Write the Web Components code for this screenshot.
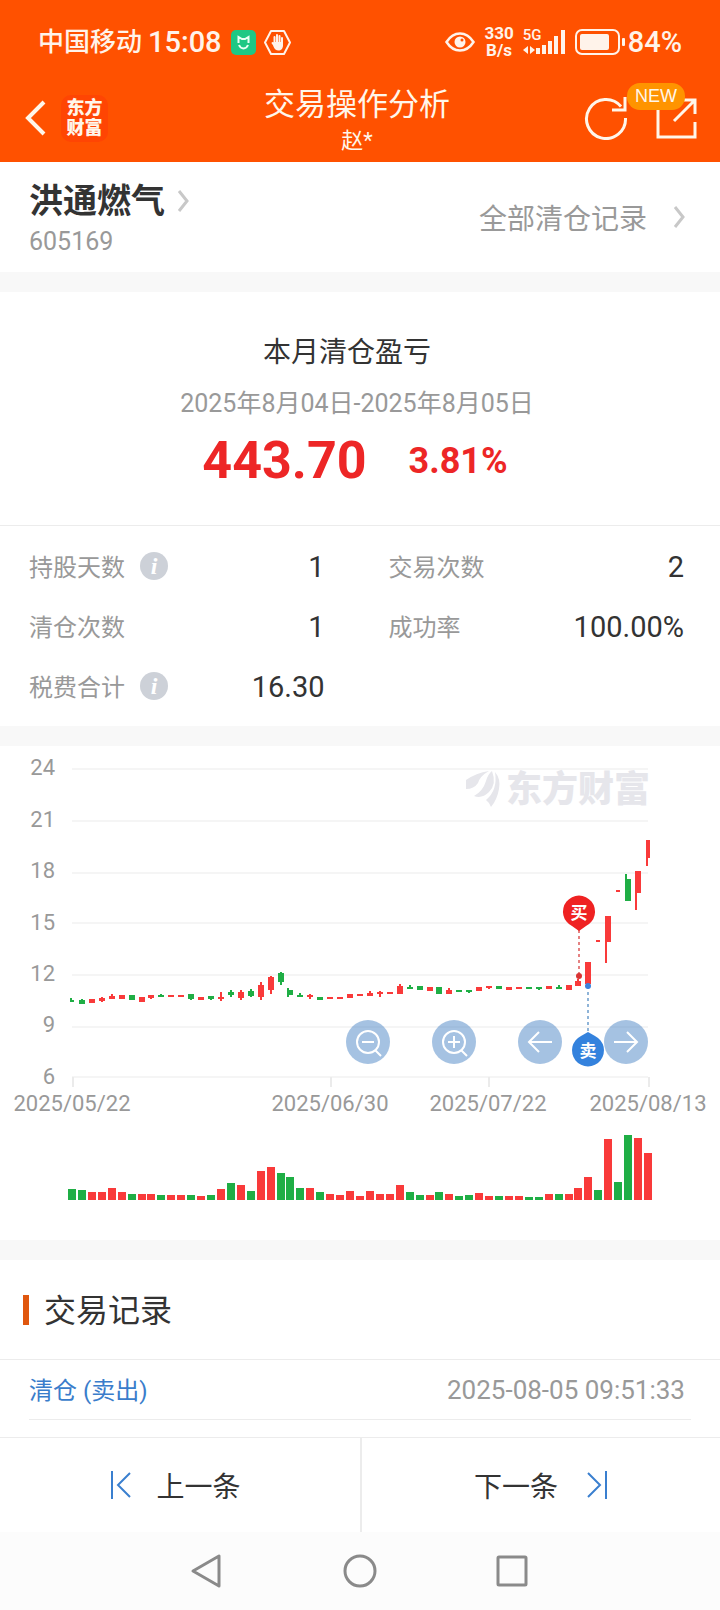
<!DOCTYPE html>
<html lang="zh-CN">
<head>
<meta charset="utf-8">
<meta name="viewport" content="width=device-width, initial-scale=1">
<title>交易操作分析</title>
<style>
    body {
        margin: 0;
        background: #f8f8f8;
        color: #333;
        font-family: Roboto, "Noto Sans CJK SC", sans-serif;
    }
</style>
</head>
<body>
<trade-page></trade-page>

<script>
class StatusBar extends HTMLElement {
    constructor() {
        super();
        this.attachShadow({ mode: 'open' }).innerHTML = `
            <style>
            :host {
                display: flex;
                align-items: center;
                justify-content: space-between;
                height: 84px;
                padding: 0 38px;
                color: #fff3ea;
                font-size: 29px;
                font-weight: 500;
            }
            .side { display: flex; align-items: center; }
            .carrier { font-size: 26px; line-height: 36px; }
            .time { margin: 0 9px 0 6px; }
            .hand { margin-left: 8px; }
            .speed {
                margin: 0 9px;
                font-size: 17px;
                line-height: 17px;
                font-weight: 700;
                text-align: center;
            }
            .signal { position: relative; }
            .signal span {
                position: absolute;
                left: 0;
                top: -2px;
                font-size: 15px;
                line-height: 18px;
            }
            .battery { margin: 0 3px 0 9px; }
            svg { display: block; }
            </style>
            <div class="side">
                <span class="carrier">中国移动</span>
                <span class="time">15:08</span>
                <svg width="25" height="25" viewBox="0 0 25 25">
                    <rect width="25" height="25" rx="5" fill="#1ec884"/>
                    <path d="M7.500 13V7l3.500 2h3l3.500-2v6M8 15c1 2.500 2.500 3.500 4.500 3.500s3.500-1 4.500-3.500" fill="none" stroke="#e9fff4" stroke-width="2"/>
                </svg>
                <svg class="hand" width="27" height="25" viewBox="0 0 27 25">
                    <path d="M7 1h13l6 11.500-6 11.500H7L1 12.500z" fill="none" stroke="currentColor" stroke-width="2" stroke-linejoin="round"/>
                    <path d="M10.500 13V7M13 12V5M15.500 12V6M18 13V8M8.500 13l3 4" stroke="currentColor" stroke-width="2" stroke-linecap="round"/>
                    <path d="M9.500 12H19v3.500c0 3-2 5-4.500 5s-4-1.500-5-4z" fill="currentColor"/>
                </svg>
            </div>
            <div class="side">
                <svg width="30" height="22" viewBox="0 0 30 22">
                    <path d="M1.500 11Q7 2.500 15 2.500T28.500 11Q23 19.500 15 19.500T1.500 11z" fill="none" stroke="currentColor" stroke-width="2.500"/>
                    <circle cx="15" cy="11" r="5.500" fill="currentColor"/>
                    <circle cx="17" cy="9" r="1.500" fill="#ff5100"/>
                </svg>
                <div class="speed">330<br>B/s</div>
                <div class="signal">
                    <span>5G</span>
                    <svg width="43" height="28" viewBox="0 0 43 28" fill="currentColor">
                        <path d="M0 22l5-4v8zM12 22l-5-4v8zM13 20h4v6h-4zM19 17h4v9h-4zM25 13h4v13h-4zM31 8h4v18h-4zM38 2h4v24h-4z"/>
                    </svg>
                </div>
                <svg class="battery" width="50" height="26" viewBox="0 0 50 26">
                    <rect x="1" y="1" width="43" height="24" rx="6" fill="none" stroke="currentColor" stroke-width="2"/>
                    <rect x="5" y="5" width="29" height="16" rx="2" fill="currentColor"/>
                    <rect x="47" y="9" width="3" height="8" rx="1" fill="currentColor"/>
                </svg>
                <span>84%</span>
            </div>
        `;
    }
}

class TitleBar extends HTMLElement {
    constructor() {
        super();
        this.attachShadow({ mode: 'open' }).innerHTML = `
            <style>
            :host {
                display: grid;
                grid-template-columns: 1fr auto 1fr;
                height: 78px;
                padding: 0 22px 0 24px;
                color: #fff6ea;
            }
            .side { display: flex; align-items: center; height: 68px; }
            .right { justify-content: flex-end; gap: 26px; }
            .title { margin-right: 8px; }
            button {
                display: block;
                padding: 0;
                border: 0;
                background: none;
                color: inherit;
            }
            svg { display: block; }
            .brand {
                display: flex;
                flex-direction: column;
                justify-content: center;
                width: 47px;
                height: 47px;
                margin-left: 13px;
                border-radius: 10px;
                background: #ff4503;
                font-size: 18px;
                line-height: 20px;
                font-weight: 900;
                text-align: center;
            }
            h1 {
                margin: 0;
                font-size: 31px;
                line-height: 42px;
                font-weight: 400;
                text-align: center;
            }
            p {
                margin: 0;
                font-size: 22px;
                line-height: 30px;
                text-align: center;
            }
            .share { position: relative; }
            .badge {
                position: absolute;
                right: 13px;
                top: -13px;
                padding: 0 8px;
                border-radius: 13px;
                background: #ff9400;
                font: 18px/27px "Liberation Sans", sans-serif;
            }
            </style>
            <div class="side">
                <button aria-label="返回">
                    <svg width="24" height="36" viewBox="0 0 24 36">
                        <path d="M20 2L4 18l16 16" fill="none" stroke="currentColor" stroke-width="4"/>
                    </svg>
                </button>
                <div class="brand"><span>东方</span><span>财富</span></div>
            </div>
            <div class="title">
                <h1><slot></slot></h1>
                <p><slot name="user"></slot></p>
            </div>
            <div class="side right">
                <button aria-label="刷新">
                    <svg width="44" height="44" viewBox="0 0 44 44" fill="none" stroke="currentColor" stroke-width="3">
                        <path d="M41.500 22A19.500 19.500 0 1 1 37 10.500M41 1v13H28"/>
                    </svg>
                </button>
                <button class="share" aria-label="分享">
                    <svg width="44" height="44" viewBox="0 0 44 44" fill="none" stroke="currentColor" stroke-width="3">
                        <path d="M16 4H4v37h37V26M28 4h13v14M41 4L20 25"/>
                    </svg>
                    <span class="badge">NEW</span>
                </button>
            </div>
        `;
    }
}

class StockHead extends HTMLElement {
    constructor() {
        super();
        this.attachShadow({ mode: 'open' }).innerHTML = `
            <style>
            :host {
                display: flex;
                align-items: center;
                justify-content: space-between;
                height: 110px;
                padding: 0 35px 0 29px;
                background: #fff;
            }
            a {
                display: flex;
                align-items: center;
                color: inherit;
                text-decoration: none;
            }
            .stock { padding-top: 6px; }
            .name {
                gap: 12px;
                font-size: 34px;
                line-height: 44px;
                font-weight: 700;
            }
            .code { color: #999; font-size: 25px; line-height: 38px; }
            .all { gap: 26px; color: #999; font-size: 28px; }
            svg { display: block; }
            </style>
            <div class="stock">
                <a class="name" href="#stock">
                    <slot></slot>
                    <svg width="12" height="24" viewBox="0 0 12 24"><path d="M2 2l8 10-8 10" fill="none" stroke="#c8c8c8" stroke-width="3"/></svg>
                </a>
                <div class="code"><slot name="code"></slot></div>
            </div>
            <a class="all" href="#records">
                <slot name="link"></slot>
                <svg width="12" height="24" viewBox="0 0 12 24"><path d="M2 2l8 10-8 10" fill="none" stroke="#c8c8c8" stroke-width="3"/></svg>
            </a>
        `;
    }
}

class ProfitSummary extends HTMLElement {
    constructor() {
        super();
        this.attachShadow({ mode: 'open' }).innerHTML = `
            <style>
            :host {
                display: block;
                margin-top: 20px;
                padding: 37px 6px 34px 0;
                border-bottom: 1px solid #ececec;
                background: #fff;
                text-align: center;
            }
            h2 {
                margin: 0 20px 0 0;
                font-size: 28px;
                line-height: 48px;
                font-weight: 400;
            }
            .range { color: #999; font-size: 25px; line-height: 54px; }
            .result {
                display: flex;
                align-items: center;
                justify-content: center;
                gap: 42px;
                padding-right: 4px;
                color: #ed2626;
                font-weight: 700;
                font-size: 36px;
                line-height: 60px;
            }
            .amount { font-size: 52px; }
            </style>
            <h2><slot></slot></h2>
            <div class="range"><slot name="range"></slot></div>
            <div class="result">
                <span class="amount"><slot name="amount"></slot></span>
                <span><slot name="rate"></slot></span>
            </div>
        `;
    }
}

class StatItem extends HTMLElement {
    constructor() {
        super();
        this.attachShadow({ mode: 'open' }).innerHTML = `
            <style>
            :host { display: flex; align-items: center; height: 60px; }
            .label { padding-bottom: 2px; color: #999; font-size: 24px; }
            .value { margin-left: auto; padding-top: 2px; font-size: 29px; }
            button {
                display: none;
                width: 28px;
                height: 28px;
                margin-left: 15px;
                padding: 0;
                border: 0;
                border-radius: 50%;
                background: #cdd1d8;
                color: #fff;
                font: italic bold 24px/28px "Liberation Serif", serif;
            }
            :host([info]) button { display: block; }
            </style>
            <span class="label"></span>
            <button aria-label="说明">i</button>
            <span class="value"><slot></slot></span>
        `;
    }

    connectedCallback() {
        this.shadowRoot.querySelector('.label').textContent = this.getAttribute('label');
    }
}

class StatGrid extends HTMLElement {
    constructor() {
        super();
        this.attachShadow({ mode: 'open' }).innerHTML = `
            <style>
            :host {
                display: grid;
                grid-template-columns: 1fr 1fr;
                column-gap: 64px;
                padding: 10px 36px 10px 29px;
                background: #fff;
            }
            </style>
            <slot></slot>
        `;
    }
}

const UP = '#f93a3a';
const DOWN = '#1fae45';

// trend, body top, body bottom, wick top, wick bottom
const CANDLES = [
    ['d', 254, 256, 252, 256], ['d', 254, 258, 253, 258], ['u', 253, 257, 253, 257],
    ['u', 252, 255, 251, 256], ['u', 250, 253, 248, 253], ['u', 249, 253, 249, 253],
    ['d', 249, 254, 249, 254], ['u', 251, 256, 251, 256], ['u', 249, 252, 249, 253],
    ['d', 249, 251, 248, 251], ['u', 249, 251, 249, 251], ['u', 249, 251, 249, 251],
    ['d', 248, 253, 248, 254], ['u', 251, 254, 251, 254], ['d', 250, 253, 250, 254],
    ['u', 251, 253, 246, 255], ['d', 246, 249, 244, 251], ['u', 246, 252, 244, 254],
    ['d', 245, 250, 243, 251], ['u', 239, 251, 236, 254], ['u', 231, 244, 230, 248],
    ['d', 227, 236, 226, 239], ['d', 244, 249, 242, 251], ['d', 249, 251, 247, 251],
    ['u', 249, 251, 248, 253], ['d', 251, 254, 251, 254], ['u', 251, 253, 251, 253],
    ['u', 251, 253, 251, 253], ['u', 248, 252, 248, 252], ['u', 248, 250, 248, 250],
    ['u', 247, 250, 245, 250], ['u', 246, 248, 245, 251], ['u', 246, 248, 246, 248],
    ['u', 240, 248, 238, 248], ['d', 241, 243, 239, 243], ['d', 240, 244, 240, 244],
    ['u', 241, 245, 241, 245], ['d', 241, 248, 241, 248], ['u', 244, 248, 242, 248],
    ['d', 244, 246, 244, 246], ['d', 244, 246, 244, 247], ['u', 241, 245, 241, 245],
    ['u', 240, 242, 240, 243], ['d', 240, 243, 240, 243], ['u', 241, 244, 241, 244],
    ['u', 241, 243, 241, 243], ['d', 241, 243, 241, 243], ['d', 241, 243, 241, 244],
    ['u', 240, 243, 240, 243], ['d', 241, 243, 239, 243], ['u', 239, 244, 239, 244],
    ['u', 235, 240, 233, 240], ['u', 216, 238, 216, 238], ['u', 194, 196, 194, 196],
    ['u', 170, 196, 170, 217], ['u', 144, 146, 144, 146], ['d', 133, 155, 128, 155],
    ['u', 125, 147, 125, 164], ['u', 94, 112, 94, 120]
];

// a negative value is a falling day
const VOLUMES = [
    -11, -10, 8, 8, 12, 8, -6, 6, 6, -5, 5, 5, -5, 4, -5, 11, -17, 15, -9, 29,
    33, -27, -23, -12, 12, -8, 6, 5, 9, 4, 9, 6, 6, 15, -8, -5, 5, -8, 6, -4,
    -5, 7, 4, -4, 4, 4, -3, -3, 6, -6, 6, 12, 23, -10, 61, -18, -65, 62, 47
];

const STEP = 576 / 58;

class PriceChart extends HTMLElement {
    constructor() {
        super();
        this.attachShadow({ mode: 'open' }).innerHTML = `
            <style>
            :host {
                display: block;
                position: relative;
                margin-top: 20px;
                background: #fff;
            }
            svg { display: block; }
            .plot { width: 100%; height: auto; }
            .axis { fill: #999; font-size: 22px; }
            .mark { fill: #e6e6eb; }
            .mark text { font-size: 36px; font-weight: 900; }
            .pin { fill: #fff; font-size: 17px; font-weight: 700; text-anchor: middle; }
            .tools {
                position: absolute;
                top: 274px;
                right: 10%;
                display: flex;
                gap: 42px;
            }
            button {
                width: 44px;
                height: 44px;
                padding: 0;
                border: 0;
                border-radius: 50%;
                background: rgba(75, 133, 198, .5);
            }
            </style>
            <svg class="plot" viewBox="0 0 720 494">
                <g class="grid"></g>
                <g class="axis"></g>
                <g class="mark">
                    <path d="M466 34Q476 27 489 25Q480 30 478 37Q474 43 466 43z"/>
                    <path d="M474 50Q483 45 486 35Q488 28 492 25Q497 38 489 46Q482 53 474 50z"/>
                    <path d="M486 54Q498 44 495 26Q501 33 499 43Q497 54 491 61Q490 57 486 54z"/>
                    <text x="506" y="56">东方财富</text>
                </g>
                <g class="candles"></g>
                <g class="volumes"></g>
                <path d="M579 184v46" stroke="#e58282" stroke-width="2" stroke-dasharray="3 3"/>
                <path d="M588 240v46" stroke="#8fb4d8" stroke-width="2" stroke-dasharray="3 3"/>
                <circle cx="579" cy="230" r="3" fill="#d93434"/>
                <circle cx="588" cy="240" r="3" fill="#3b82dc"/>
                <path d="M579 185l-7-5a16 16 0 1 1 14 0z" fill="#ef2222"/>
                <path d="M588 286l-7 4a16 16 0 1 0 14 0z" fill="#3482dd"/>
                <g class="pin">
                    <text x="579" y="173">买</text>
                    <text x="588" y="311">卖</text>
                </g>
            </svg>
            <div class="tools">
                <button aria-label="缩小"><svg viewBox="0 0 44 44" fill="none" stroke="#fff" stroke-width="2"><circle cx="22" cy="22" r="11"/><path d="M16 22h12M29 30l6 6"/></svg></button>
                <button aria-label="放大"><svg viewBox="0 0 44 44" fill="none" stroke="#fff" stroke-width="2"><circle cx="22" cy="22" r="11"/><path d="M16 22h12M22 16v12M29 30l6 6"/></svg></button>
                <button aria-label="左移"><svg viewBox="0 0 44 44" fill="none" stroke="#fff" stroke-width="2"><path d="M34 22H11M21 12L11 22l10 10"/></svg></button>
                <button aria-label="右移"><svg viewBox="0 0 44 44" fill="none" stroke="#fff" stroke-width="2"><path d="M10 22h23M23 12l10 10-10 10"/></svg></button>
            </div>
        `;
        this.draw();
    }

    draw() {
        const $ = (selector) => this.shadowRoot.querySelector(selector);
        const rect = (x, y, w, h, fill) => `<rect x="${x}" y="${y}" width="${w}" height="${h}" fill="${fill}"/>`;

        const rows = [[24, 23, 29], [21, 75, 81], [18, 127, 132], [15, 177, 184], [12, 229, 235], [9, 281, 286], [6, 331, 338]];
        const dates = [[72, '2025/05/22'], [330, '2025/06/30'], [488, '2025/07/22'], [648, '2025/08/13']];

        $('.grid').innerHTML = rows.map(([, y]) => rect(72, y - 1, 576, 2, '#f5f5f5')).join('')
            + dates.map(([x]) => rect(x, 331, 2, 10, '#ebebeb')).join('');
        $('.axis').innerHTML = rows.map(([label, , y]) => `<text x="55" y="${y}" text-anchor="end">${label}</text>`).join('')
            + dates.map(([x, label]) => `<text x="${x}" y="365" text-anchor="middle">${label}</text>`).join('');

        const last = CANDLES.length - 1;
        $('.candles').innerHTML = CANDLES.map(([trend, top, bottom, high, low], i) => {
            const x = Math.round(72 + i * STEP);
            const fill = trend === 'u' ? UP : DOWN;
            const edge = i === 0 || i === last;
            const flat = i === 53 || i === 55;
            const left = edge || i === 22 || i > 53;
            return rect(edge || flat ? x - 2 : x - 3, top, edge || flat ? 4 : 6, bottom - top, fill)
                + rect(edge || flat ? x - 2 : left ? x - 3 : x - 1, high, 2, low - high, fill);
        }).join('');

        $('.volumes').innerHTML = VOLUMES.map((v, i) =>
            rect(Math.round(68 + i * STEP), 454 - Math.abs(v), 8, Math.abs(v), v > 0 ? UP : DOWN)
        ).join('');
    }
}

class TradeRecords extends HTMLElement {
    constructor() {
        super();
        this.attachShadow({ mode: 'open' }).innerHTML = `
            <style>
            :host {
                display: block;
                margin-top: 20px;
                padding-bottom: 17px;
                background: #fff;
            }
            h2 {
                display: flex;
                align-items: center;
                gap: 15px;
                height: 99px;
                margin: 0;
                padding: 0 23px;
                border-bottom: 1px solid #ececec;
                font-size: 32px;
                font-weight: 400;
            }
            h2::before { content: ""; width: 6px; height: 30px; background: #e0570e; }
            h2 span { padding-bottom: 4px; }
            .row {
                display: flex;
                align-items: center;
                justify-content: space-between;
                height: 59px;
                margin: 0 29px;
                padding-right: 6px;
                border-bottom: 1px solid #ececec;
                color: #3a7dcb;
                font-size: 24px;
            }
            .type { padding-bottom: 2px; }
            time { color: #999; font-size: 26px; }
            </style>
            <h2><span><slot></slot></span></h2>
            <div class="row">
                <span class="type"><slot name="type"></slot></span>
                <time><slot name="time"></slot></time>
            </div>
        `;
    }
}

class RecordPager extends HTMLElement {
    constructor() {
        super();
        this.attachShadow({ mode: 'open' }).innerHTML = `
            <style>
            :host {
                display: grid;
                grid-template-columns: 1fr 1fr;
                height: 94px;
                border-top: 1px solid #ececec;
                background: #fff;
            }
            button {
                display: flex;
                align-items: center;
                justify-content: center;
                gap: 24px;
                padding: 0 9px 0 0;
                border: 0;
                background: none;
                color: #333;
                font: inherit;
                font-size: 28px;
            }
            button + button { gap: 28px; padding: 0; border-left: 2px solid #ececec; }
            svg { display: block; fill: none; stroke: #3a7fcf; stroke-width: 2; }
            </style>
            <button>
                <svg width="22" height="28" viewBox="0 0 22 28"><path d="M2 0v28M20 2L8 14l12 12"/></svg>
                上一条
            </button>
            <button>
                下一条
                <svg width="22" height="28" viewBox="0 0 22 28"><path d="M20 0v28M2 2l12 12L2 26"/></svg>
            </button>
        `;
    }
}

class SystemNav extends HTMLElement {
    constructor() {
        super();
        this.attachShadow({ mode: 'open' }).innerHTML = `
            <style>
            :host {
                display: flex;
                align-items: center;
                justify-content: center;
                gap: 116px;
                height: 78px;
                background: #fcfcfc;
            }
            button { padding: 0; border: 0; background: none; }
            svg { display: block; fill: none; stroke: #8a8a8a; stroke-width: 3; stroke-linejoin: round; }
            </style>
            <button aria-label="后退"><svg width="36" height="36" viewBox="0 0 36 36"><path d="M29 3v30L3 18z"/></svg></button>
            <button aria-label="主屏幕"><svg width="36" height="36" viewBox="0 0 36 36"><circle cx="18" cy="18" r="15"/></svg></button>
            <button aria-label="最近任务"><svg width="36" height="36" viewBox="0 0 36 36"><rect x="4" y="4" width="28" height="28" rx="1"/></svg></button>
        `;
    }
}

class TradePage extends HTMLElement {
    constructor() {
        super();
        this.attachShadow({ mode: 'open' }).innerHTML = `
            <style>
            :host { display: block; }
            header { background: #ff5100; }
            </style>
            <header>
                <status-bar></status-bar>
                <title-bar>交易操作分析<span slot="user">赵*</span></title-bar>
            </header>
            <main>
                <stock-head>
                    洪通燃气
                    <span slot="code">605169</span>
                    <span slot="link">全部清仓记录</span>
                </stock-head>
                <profit-summary>
                    本月清仓盈亏
                    <span slot="range">2025年8月04日-2025年8月05日</span>
                    <span slot="amount">443.70</span>
                    <span slot="rate">3.81%</span>
                </profit-summary>
                <stat-grid>
                    <stat-item label="持股天数" info>1</stat-item>
                    <stat-item label="交易次数">2</stat-item>
                    <stat-item label="清仓次数">1</stat-item>
                    <stat-item label="成功率">100.00%</stat-item>
                    <stat-item label="税费合计" info>16.30</stat-item>
                </stat-grid>
                <price-chart></price-chart>
                <trade-records>
                    交易记录
                    <span slot="type">清仓 (卖出)</span>
                    <span slot="time">2025-08-05 09:51:33</span>
                </trade-records>
            </main>
            <record-pager></record-pager>
            <system-nav></system-nav>
        `;
    }
}

customElements.define('status-bar', StatusBar);
customElements.define('title-bar', TitleBar);
customElements.define('stock-head', StockHead);
customElements.define('profit-summary', ProfitSummary);
customElements.define('stat-item', StatItem);
customElements.define('stat-grid', StatGrid);
customElements.define('price-chart', PriceChart);
customElements.define('trade-records', TradeRecords);
customElements.define('record-pager', RecordPager);
customElements.define('system-nav', SystemNav);
customElements.define('trade-page', TradePage);
</script>
</body>
</html>
